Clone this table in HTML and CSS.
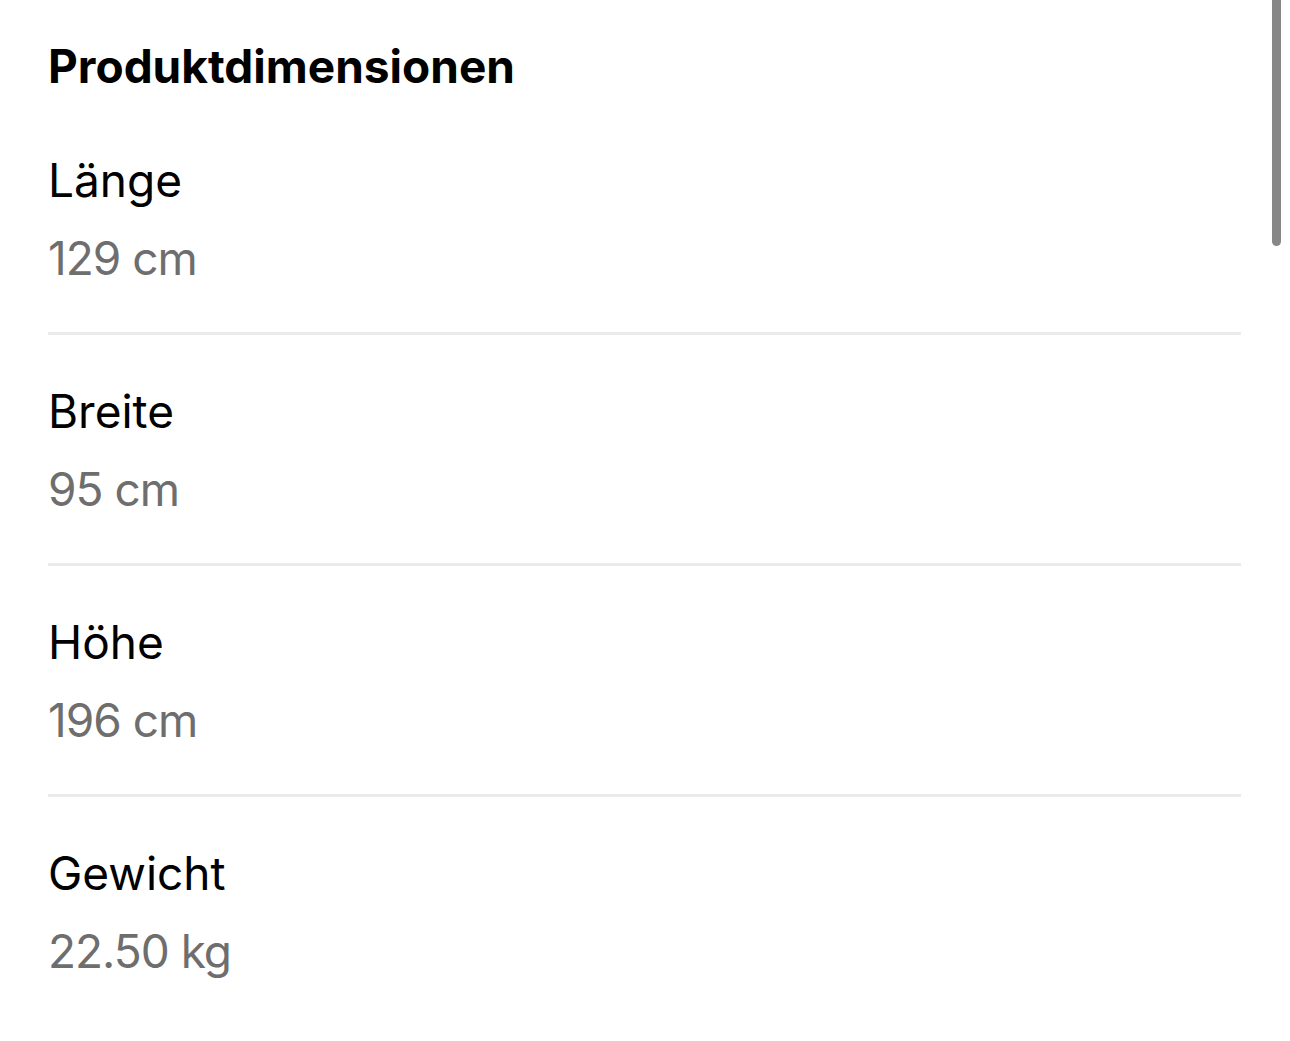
FILE: index.html
```html
<!DOCTYPE html>
<html>
<head>
<meta name="viewport" content="width=device-width, initial-scale=1">
<link rel="stylesheet" href="styles.css">
<title>Produktdimensionen</title>
</head>
<body>

<div class="sheet">
    <h2 class="heading">Produktdimensionen</h2>

    <div class="row">
        <div class="label">Länge</div>
        <div class="value">129 cm</div>
    </div>
    <div class="row">
        <div class="label">Breite</div>
        <div class="value">95 cm</div>
    </div>
    <div class="row">
        <div class="label">Höhe</div>
        <div class="value">196 cm</div>
    </div>
    <div class="row last">
        <div class="label">Gewicht</div>
        <div class="value">22.50 kg</div>
    </div>
</div>

<!-- scroll indicator on the right -->
<div class="scroll-thumb"></div>

</body>
</html>
```

FILE: styles.css
```css
body {
    margin: 0;
    background-color: #ffffff;
    font-family: Inter, Lato, sans-serif;
    color: #000000;
}

.sheet {
    padding: 0 49px 0 48px;
}

.heading {
    margin: 0;
    padding-top: 28px;
    font-size: 46px;
    font-weight: 700;
    line-height: 76px;
}

.row {
    padding: 37px 0 35px;
    border-bottom: 3px solid #ebebeb;
}

.row.last {
    border-bottom: none;
}

.label {
    font-size: 46px;
    line-height: 78px;
}

.value {
    font-size: 46px;
    line-height: 78px;
    letter-spacing: -1px;
    color: #6e6e6e;
}

.scroll-thumb {
    position: absolute;
    top: 0;
    right: 9px;
    width: 9px;
    height: 246px;
    background-color: #878787;
    border-radius: 0 0 5px 5px;
}
```
